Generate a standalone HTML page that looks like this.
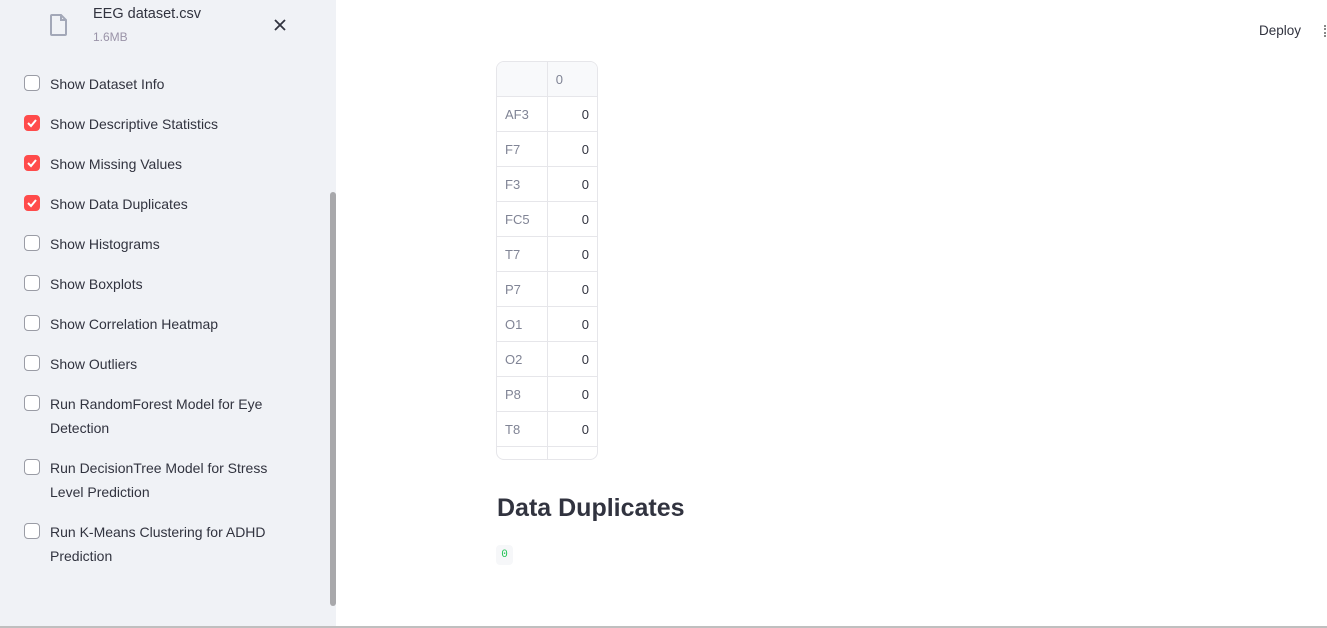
<!DOCTYPE html>
<html><head><style>
*{margin:0;padding:0;box-sizing:border-box}
body{width:1327px;height:628px;overflow:hidden;background:#fff;font-family:"Liberation Sans",sans-serif;color:#31333f;position:relative}
#sb{position:absolute;left:0;top:0;width:336px;height:626px;background:#f0f2f6}
.cb{position:absolute;left:24px;width:16px;height:16px;border:1px solid #9a9ca5;border-radius:4px;background:#fff}
.cb.on{background:#ff4b4b;border-color:#ff4b4b}
.cb.on svg{position:absolute;left:0px;top:0px}
.lb{position:absolute;left:50px;font-size:14px;line-height:24px;color:#31333f}
#scroll{position:absolute;left:330px;top:192px;width:6px;height:414px;background:#a8a8ab;border-radius:3px}
#bot{position:absolute;left:0;top:626px;width:1327px;height:2px;background:#bfbfbf}
table{position:absolute;left:496px;top:61px;border-collapse:separate;border-spacing:0;border:1px solid #e6e6ea;border-radius:8px;overflow:hidden;font-size:13px;width:102px}
td{height:35px;border-bottom:1px solid #e6e6ea;padding:0 8px}
td.i{width:51px;color:#808495;border-right:1px solid #e6e6ea}
td.v{width:50px;text-align:right;color:#31333f}
tr.h td{background:#f8f9fb;color:#808495;text-align:left}
</style></head><body>
<div id="sb">
<svg style="position:absolute;left:49px;top:13px" width="20" height="24" viewBox="0 0 20 24"><path d="M3 2h9l5 5v14a1 1 0 0 1-1 1H3a1 1 0 0 1-1-1V3a1 1 0 0 1 1-1z" fill="none" stroke="#a3a8b8" stroke-width="2"/><path d="M12 2v5h5" fill="none" stroke="#a3a8b8" stroke-width="2"/></svg>
<div style="position:absolute;left:93px;top:6px;font-size:14.5px;color:#31333f">EEG dataset.csv</div>
<div style="position:absolute;left:93px;top:30px;font-size:12px;color:#9a93a8">1.6MB</div>
<svg style="position:absolute;left:274px;top:19px" width="12" height="12" viewBox="0 0 12 12"><path d="M1 1L11 11M11 1L1 11" stroke="#31333f" stroke-width="1.8"/></svg>

<div class="cb" style="top:75px"></div><div class="lb" style="top:72px">Show Dataset Info</div>
<div class="cb on" style="top:115px"><svg width="14" height="14" viewBox="0 0 14 14"><path d="M3 7l3 3 5-6" fill="none" stroke="#fff" stroke-width="2"/></svg></div><div class="lb" style="top:112px">Show Descriptive Statistics</div>
<div class="cb on" style="top:155px"><svg width="14" height="14" viewBox="0 0 14 14"><path d="M3 7l3 3 5-6" fill="none" stroke="#fff" stroke-width="2"/></svg></div><div class="lb" style="top:152px">Show Missing Values</div>
<div class="cb on" style="top:195px"><svg width="14" height="14" viewBox="0 0 14 14"><path d="M3 7l3 3 5-6" fill="none" stroke="#fff" stroke-width="2"/></svg></div><div class="lb" style="top:192px">Show Data Duplicates</div>
<div class="cb" style="top:235px"></div><div class="lb" style="top:232px">Show Histograms</div>
<div class="cb" style="top:275px"></div><div class="lb" style="top:272px">Show Boxplots</div>
<div class="cb" style="top:315px"></div><div class="lb" style="top:312px">Show Correlation Heatmap</div>
<div class="cb" style="top:355px"></div><div class="lb" style="top:352px">Show Outliers</div>
<div class="cb" style="top:395px"></div><div class="lb" style="top:392px">Run RandomForest Model for Eye<br>Detection</div>
<div class="cb" style="top:459px"></div><div class="lb" style="top:456px">Run DecisionTree Model for Stress<br>Level Prediction</div>
<div class="cb" style="top:523px"></div><div class="lb" style="top:520px">Run K-Means Clustering for ADHD<br>Prediction</div>
<div id="scroll"></div>
</div>
<div style="position:absolute;left:1259px;top:23px;font-size:13.5px;color:#31333f">Deploy</div>
<div style="position:absolute;left:1324px;top:25px;width:2px;height:12px;border-left:2px dotted #888"></div>
<table>
<tr class="h"><td class="i"></td><td class="v" style="text-align:left;color:#808495">0</td></tr>
<tr><td class="i">AF3</td><td class="v">0</td></tr>
<tr><td class="i">F7</td><td class="v">0</td></tr>
<tr><td class="i">F3</td><td class="v">0</td></tr>
<tr><td class="i">FC5</td><td class="v">0</td></tr>
<tr><td class="i">T7</td><td class="v">0</td></tr>
<tr><td class="i">P7</td><td class="v">0</td></tr>
<tr><td class="i">O1</td><td class="v">0</td></tr>
<tr><td class="i">O2</td><td class="v">0</td></tr>
<tr><td class="i">P8</td><td class="v">0</td></tr>
<tr><td class="i">T8</td><td class="v">0</td></tr>
<tr><td class="i" style="height:12px;border-bottom:none"></td><td class="v" style="height:12px;border-bottom:none"></td></tr>
</table>
<div style="position:absolute;left:497px;top:494px;font-size:25px;font-weight:bold;color:#31333f">Data Duplicates</div>
<div style="position:absolute;left:496px;top:545px;width:17px;height:20px;background:#f6f7f9;border-radius:4px;font-family:'Liberation Mono',monospace;font-size:11px;color:#21c354;text-align:center;line-height:20px">0</div>
<div id="bot"></div>
</body></html>
